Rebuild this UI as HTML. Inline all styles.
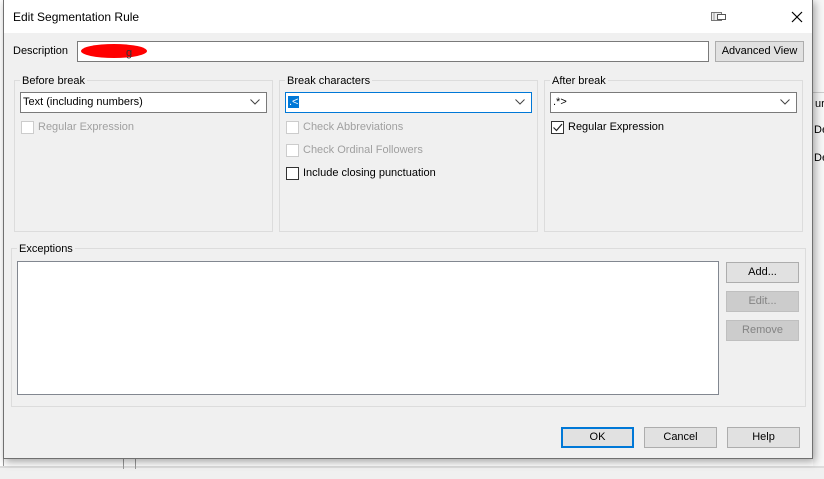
<!DOCTYPE html>
<html><head><meta charset="utf-8"><style>
*{box-sizing:border-box;margin:0;padding:0}
body{width:824px;height:479px;background:#fff;position:relative;overflow:hidden;font-family:"Liberation Sans",sans-serif;font-size:11px;color:#000}
.a{position:absolute}
.dlg{left:3px;top:-1px;width:810px;height:460px;background:#f0f0f0;border:1px solid #707070;box-shadow:2px 3px 8px rgba(0,0,0,.35)}
.title{left:0;top:0;width:808px;height:33px;background:#fff}
.grp{border:1px solid #dcdcdc}
.lbl{background:#f0f0f0;padding:0 2px;line-height:14px}
.inp{background:#fff;border:1px solid #7a7a7a;line-height:19px;padding-left:2px}
.btn{background:#e1e1e1;border:1px solid #adadad;text-align:center;line-height:18px}
.dis{background:#cccccc;border:1px solid #bfbfbf;color:#838383}
.cb{width:13px;height:13px;border:1px solid #333;background:#fff}
.cbd{border-color:#cccccc}
.gray{color:#a0a0a0}
.chev{position:absolute;right:6px;top:6px}
</style></head><body>
<div class="a" style="left:0;top:0;width:4px;height:470px;border-right:1px solid #999"></div>
<div class="a" style="left:0;top:466px;width:824px;height:13px;background:#f0f0f0;border-top:2px solid #ddd"></div>
<div class="a" style="left:123px;top:459px;width:1px;height:10px;background:#999"></div>
<div class="a" style="left:135px;top:459px;width:1px;height:10px;background:#999"></div>
<div class="a" style="left:813px;top:0;width:11px;height:466px;background:#f7f7f7"></div>
<div class="a" style="left:813px;top:92px;width:11px;height:1px;background:#ccc"></div>
<div class="a" style="left:815px;top:98px">urr</div>
<div class="a" style="left:814px;top:124px">De</div>
<div class="a" style="left:814px;top:152px">De</div>

<div class="a dlg">
 <div class="a title"></div>
 <div class="a" style="left:9px;top:10px;font-size:12px">Edit Segmentation Rule</div>
 <svg class="a" style="left:707px;top:12px" width="16" height="10"><rect x="0.5" y="0.5" width="10" height="8" fill="#eee" stroke="#777"/><rect x="6.5" y="2.5" width="8" height="5" fill="#fff" stroke="#555"/><line x1="3" y1="1" x2="3" y2="8" stroke="#999"/></svg>
 <svg class="a" style="left:787px;top:11px" width="12" height="12"><path d="M1 1L11 11M11 1L1 11" stroke="#000" stroke-width="1.2"/></svg>

 <div class="a" style="left:9px;top:45px">Description</div>
 <div class="a inp" style="left:73px;top:41px;width:632px;height:21px"></div>
 <svg class="a" style="left:74px;top:42px" width="80" height="19"><ellipse cx="36" cy="9" rx="33" ry="7" fill="#f00"/><text x="48" y="14" font-size="11" font-family="Liberation Sans" fill="#333">g</text></svg>
 <div class="a btn" style="left:711px;top:41px;width:89px;height:21px">Advanced View</div>

 <div class="a grp" style="left:10px;top:80px;width:259px;height:152px"></div>
 <div class="a lbl" style="left:16px;top:74px">Before break</div>
 <div class="a inp" style="left:16px;top:92px;width:247px;height:21px">Text (including numbers)<svg class="chev" width="10" height="6"><path d="M0.5 0.5L5 5L9.5 0.5" stroke="#444" fill="none"/></svg></div>
 <div class="a cb cbd" style="left:17px;top:121px"></div>
 <div class="a gray" style="left:34px;top:121px">Regular Expression</div>

 <div class="a grp" style="left:275px;top:80px;width:259px;height:152px"></div>
 <div class="a lbl" style="left:281px;top:74px">Break characters</div>
 <div class="a inp" style="left:281px;top:92px;width:247px;height:21px;border-color:#0078d7"><span style="background:#0078d7;color:#fff;padding:0 1px">.&lt;</span><svg class="chev" width="10" height="6"><path d="M0.5 0.5L5 5L9.5 0.5" stroke="#444" fill="none"/></svg></div>
 <div class="a cb cbd" style="left:282px;top:121px"></div>
 <div class="a gray" style="left:299px;top:121px">Check Abbreviations</div>
 <div class="a cb cbd" style="left:282px;top:144px"></div>
 <div class="a gray" style="left:299px;top:144px">Check Ordinal Followers</div>
 <div class="a cb" style="left:282px;top:167px"></div>
 <div class="a" style="left:299px;top:167px">Include closing punctuation</div>

 <div class="a grp" style="left:540px;top:80px;width:259px;height:152px"></div>
 <div class="a lbl" style="left:546px;top:74px">After break</div>
 <div class="a inp" style="left:546px;top:92px;width:247px;height:21px">.*&gt;<svg class="chev" width="10" height="6"><path d="M0.5 0.5L5 5L9.5 0.5" stroke="#444" fill="none"/></svg></div>
 <div class="a cb" style="left:547px;top:121px"><svg width="11" height="11" style="position:absolute;left:0;top:0"><path d="M1.5 5.5L4.5 8.5L10 2" stroke="#222" fill="none" stroke-width="1.2"/></svg></div>
 <div class="a" style="left:564px;top:121px">Regular Expression</div>

 <div class="a grp" style="left:7px;top:248px;width:795px;height:159px"></div>
 <div class="a lbl" style="left:13px;top:242px">Exceptions</div>
 <div class="a" style="left:13px;top:261px;width:702px;height:134px;background:#fff;border:1px solid #828790"></div>
 <div class="a btn" style="left:722px;top:262px;width:73px;height:21px">Add...</div>
 <div class="a btn dis" style="left:722px;top:291px;width:73px;height:21px">Edit...</div>
 <div class="a btn dis" style="left:722px;top:320px;width:73px;height:21px">Remove</div>

 <div class="a btn" style="left:557px;top:427px;width:73px;height:21px;border:2px solid #0078d7;line-height:17px">OK</div>
 <div class="a btn" style="left:640px;top:427px;width:73px;height:21px">Cancel</div>
 <div class="a btn" style="left:723px;top:427px;width:73px;height:21px">Help</div>
</div>
</body></html>
